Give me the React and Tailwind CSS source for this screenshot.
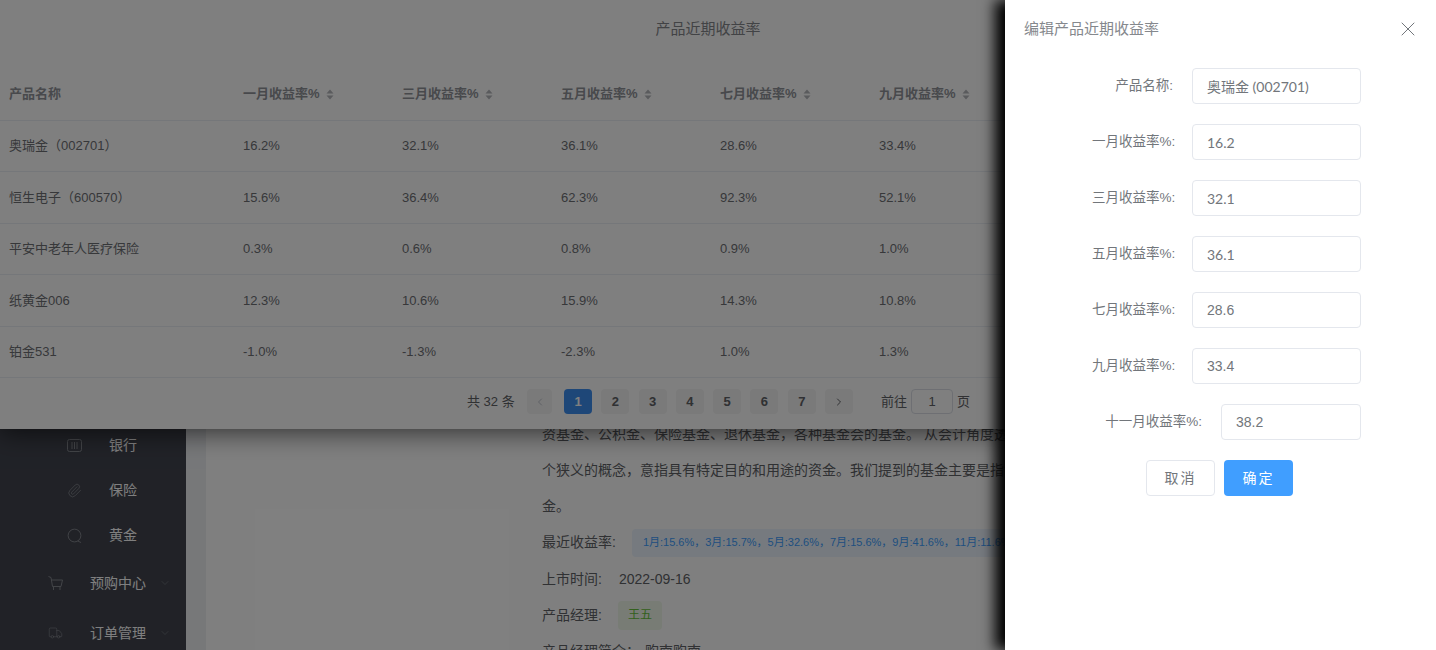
import { useState } from 'react';
import { Paperclip, Truck, ChevronDown, ChevronLeft, ChevronRight, X } from 'lucide-react';

const cjk = 'font-["Liberation_Sans","Noto_Sans_CJK_SC",sans-serif]';
const lato = 'font-["Lato","Noto_Sans_CJK_SC",sans-serif]';

const columns = ['一月收益率%', '三月收益率%', '五月收益率%', '七月收益率%', '九月收益率%'];

const rows = [
  ['奥瑞金（002701）', '16.2%', '32.1%', '36.1%', '28.6%', '33.4%'],
  ['恒生电子（600570）', '15.6%', '36.4%', '62.3%', '92.3%', '52.1%'],
  ['平安中老年人医疗保险', '0.3%', '0.6%', '0.8%', '0.9%', '1.0%'],
  ['纸黄金006', '12.3%', '10.6%', '15.9%', '14.3%', '10.8%'],
  ['铂金531', '-1.0%', '-1.3%', '-2.3%', '1.0%', '1.3%'],
];

const formRows = [
  ['产品名称:', '奥瑞金 (002701)', lato],
  ['一月收益率%:', '16.2', lato],
  ['三月收益率%:', '32.1', lato],
  ['五月收益率%:', '36.1', lato],
  ['七月收益率%:', '28.6', cjk],
  ['九月收益率%:', '33.4', cjk],
];

function BankIcon() {
  return (
    <svg width="15" height="13" viewBox="0 0 15 13" fill="none" stroke="currentColor" strokeWidth="1">
      <rect x="0.5" y="0.5" width="14" height="12" rx="2" />
      <path d="M5 3v7M7.5 3v7M10 3v7" />
    </svg>
  );
}

function GoldIcon() {
  return (
    <svg width="16" height="16" viewBox="0 0 16 16" fill="none" stroke="currentColor" strokeWidth="1">
      <circle cx="8" cy="7.5" r="6.8" />
      <path d="M11.5 13.3 15 15" />
    </svg>
  );
}

function CartIcon() {
  return (
    <svg width="15" height="15" viewBox="0 0 15 15" fill="none" stroke="currentColor" strokeWidth="1">
      <path d="M0.5 0.5 3 1.5 4.5 10.5H13L14.5 4H3.5" />
      <path d="M5.5 10.5V14M12 10.5V14" />
    </svg>
  );
}

function SortCaret() {
  return (
    <svg width="8" height="11" viewBox="0 0 8 11" className="ml-[6px] text-[#b4b6bb]" fill="currentColor">
      <path d="M4 0.5 7.5 4.5H0.5z" />
      <path d="M4 10.5 0.5 6.5H7.5z" />
    </svg>
  );
}

function SubItem({ icon, label }) {
  return (
    <div className="flex h-[45px] items-center pl-[67px] text-[14px] text-white">
      <span className="flex w-[15px] justify-center text-[#85888f]">{icon}</span>
      <span className="ml-[27px]">{label}</span>
    </div>
  );
}

function MenuItem({ icon, label }) {
  return (
    <div className="flex h-[50px] items-center pl-[48px] text-[14px] text-white">
      <span className="flex w-[15px] justify-center text-[#85888f]">{icon}</span>
      <span className="ml-[27px]">{label}</span>
      <ChevronDown size={12} strokeWidth={1} className="ml-[13px] text-[#85888f]" />
    </div>
  );
}

function Sidebar() {
  return (
    <aside className="h-full w-[186px] shrink-0 bg-[#42454f] pt-[423px]">
      <SubItem icon={<BankIcon />} label="银行" />
      <SubItem icon={<Paperclip size={15} strokeWidth={1.2} />} label="保险" />
      <SubItem icon={<GoldIcon />} label="黄金" />
      <MenuItem icon={<CartIcon />} label="预购中心" />
      <MenuItem icon={<Truck size={16} strokeWidth={1} />} label="订单管理" />
    </aside>
  );
}

function DetailContent() {
  return (
    <main className="flex-1 overflow-hidden bg-[#eef0f3] pl-[20px]">
      <div className="h-full whitespace-nowrap bg-white pl-[336px] pt-[416px] text-[14px] text-[#606266]">
        <p className="leading-[36px]">资基金、公积金、保险基金、退休基金，各种基金会的基金。 从会计角度透析，</p>
        <p className="leading-[36px]">个狭义的概念，意指具有特定目的和用途的资金。我们提到的基金主要是指证券</p>
        <p className="leading-[36px]">金。</p>
        <div className="flex h-[37px] items-center">
          <span>最近收益率:</span>
          <span className="ml-[16px] flex h-[28px] items-center rounded bg-[#ecf5ff] px-[11px] text-[11px] text-[#409eff]">
            1月:15.6%，3月:15.7%，5月:32.6%，7月:15.6%，9月:41.6%，11月:11.6%
          </span>
        </div>
        <div className="flex h-[36px] items-center">
          <span>上市时间:</span>
          <span className="ml-[17px]">2022-09-16</span>
        </div>
        <div className="flex h-[36px] items-center">
          <span>产品经理:</span>
          <span className="ml-[16px] flex h-[29px] w-[44px] items-center justify-center rounded bg-[#f0f9eb] text-[12px] text-[#67c23a]">王五</span>
        </div>
        <div className="flex h-[36px] items-center">
          <span>产品经理简介：</span>
          <span className="ml-[5px]">购南购南</span>
        </div>
      </div>
    </main>
  );
}

function Pagination() {
  const [page] = useState(1);
  return (
    <div className="flex h-[48px] items-center whitespace-nowrap pl-[467px] text-[13px] text-[#606266]">
      <span className="mr-[14px] w-[46px]">共 32 条</span>
      <button className="flex h-[25px] w-[25px] items-center justify-center rounded-sm bg-[#f4f4f5] text-[#c0c4cc]">
        <ChevronLeft size={12} />
      </button>
      <div className="ml-[12px] flex gap-[9.3px]">
        {[1, 2, 3, 4, 5, 6, 7].map((n) => (
          <button
            key={n}
            className={
              n === page
                ? 'flex h-[25px] w-[28px] items-center justify-center rounded-sm bg-[#3d8ef0] text-[13px] font-bold text-white'
                : 'flex h-[25px] w-[28px] items-center justify-center rounded-sm bg-[#f4f4f5] text-[13px] font-bold text-[#606266]'
            }
          >
            {n}
          </button>
        ))}
        <button className="flex h-[25px] w-[28px] items-center justify-center rounded-sm bg-[#f4f4f5] text-[#606266]">
          <ChevronRight size={12} />
        </button>
      </div>
      <span className="ml-[28px]">前往</span>
      <span className="mx-[4px] flex h-[25px] w-[42px] items-center justify-center rounded border border-[#dcdfe6]">1</span>
      <span>页</span>
    </div>
  );
}

// 产品近期收益率 dialog, sits on top of the detail page
function RateDialog() {
  return (
    <div className="absolute left-0 top-0 h-[429px] w-[1416px] bg-white shadow-[0_4px_24px_rgba(0,0,0,0.6)]">
      <div className="flex h-[68px] items-center justify-center pb-[10px] text-[15px] text-[#84868b]">产品近期收益率</div>
      <div className="grid h-[53px] grid-cols-[233px_repeat(5,159px)] items-center border-b border-[#ebeef5] text-[13px] font-bold text-[#909399]">
        <div className="pl-[9px]">产品名称</div>
        {columns.map((c) => (
          <div key={c} className="flex items-center pl-[10px]">
            {c}
            <SortCaret />
          </div>
        ))}
      </div>
      {rows.map((row) => (
        <div
          key={row[0]}
          className="grid h-[51.4px] grid-cols-[233px_repeat(5,159px)] items-center border-b border-[#ebeef5] text-[13px] text-[#6e7075]"
        >
          {row.map((cell, i) => (
            <div key={i} className={i === 0 ? 'pl-[9px]' : 'pl-[10px]'}>
              {cell}
            </div>
          ))}
        </div>
      ))}
      <Pagination />
    </div>
  );
}

function FormRow({ label, value, font }) {
  return (
    <div className="flex h-[36px] items-center">
      <label className="w-[100px] shrink-0 whitespace-nowrap pr-[19px] pt-[1px] text-right text-[13.5px] text-[#72767b]">{label}</label>
      <input
        readOnly
        value={value}
        className={`h-[36px] w-[169px] rounded border border-[#e4e7ed] px-[14px] text-[14px] text-[#72767b] outline-none ${font}`}
      />
    </div>
  );
}

function EditDrawer() {
  return (
    <div className="absolute bottom-0 right-0 top-0 w-[431px] bg-white shadow-[-10px_0_13px_rgba(0,0,0,1)]">
      <div className="flex h-[58px] items-center justify-between pl-[19px] pr-[16px] text-[15px] text-[#85888d]">
        <span>编辑产品近期收益率</span>
        <X size={24} strokeWidth={1} className="text-[#72767b]" />
      </div>
      <div className="ml-[87px] mt-[10px] flex w-[269px] flex-col gap-[20px]">
        {formRows.map(([label, value, font]) => (
          <FormRow key={label} label={label} value={value} font={font} />
        ))}
        <div className="flex h-[36px] items-center justify-end">
          <label className="whitespace-nowrap pr-[19px] pt-[1px] text-[13.5px] text-[#72767b]">十一月收益率%:</label>
          <input
            readOnly
            value="38.2"
            className="h-[36px] w-[140px] rounded border border-[#e4e7ed] px-[14px] text-[14px] text-[#72767b] outline-none"
          />
        </div>
      </div>
      <div className="mt-[20px] flex justify-center gap-[9px] pr-[2px]">
        <button className="h-[36px] w-[69px] rounded border border-[#e4e7ed] bg-white text-[14px] tracking-[2px] text-[#72767b]">取消</button>
        <button className="h-[36px] w-[69px] rounded bg-[#409eff] text-[14px] tracking-[2px] text-white">确定</button>
      </div>
    </div>
  );
}

export default function App() {
  return (
    <div className={`relative flex h-[650px] w-full overflow-hidden bg-white ${cjk}`}>
      <Sidebar />
      <DetailContent />
      <RateDialog />
      <div className="absolute inset-0 bg-black/50" />
      <EditDrawer />
    </div>
  );
}
